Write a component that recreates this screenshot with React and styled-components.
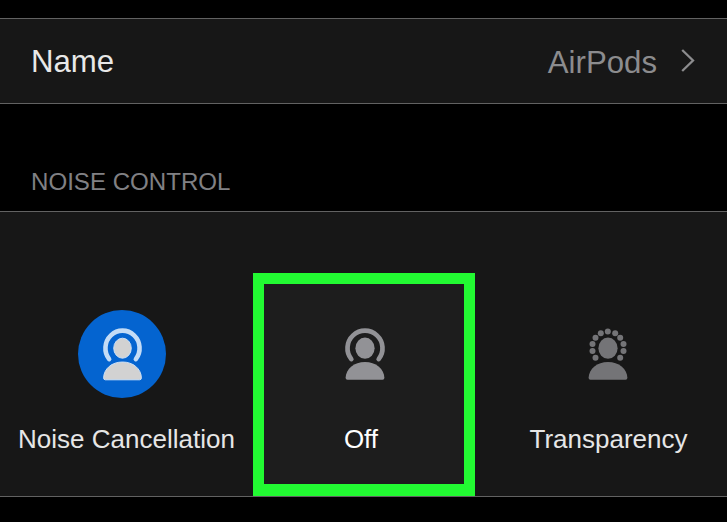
import React from "react";
import styled, { createGlobalStyle } from "styled-components";

const GlobalStyle = createGlobalStyle`
  * { box-sizing: border-box; }
  body {
    margin: 0;
    background: #000;
    font-family: "Liberation Sans", Arial, sans-serif;
    overflow: hidden;
  }
`;

const Screen = styled.main`
  width: 727px;
  height: 522px;
  padding-top: 18px;
  background: #000;
  display: flex;
  flex-direction: column;
`;

const NameRow = styled.div`
  height: 86px;
  padding: 0 32px 0 31px;
  display: flex;
  align-items: center;
  background: #171717;
  border-top: 1px solid #626262;
  border-bottom: 1px solid #626262;
  line-height: 36px;
`;

const RowLabel = styled.span`
  flex: 1;
  padding-top: 2px;
  font-size: 31.2px;
  color: #e8e8e8;
`;

const RowValue = styled.span`
  font-size: 31.2px;
  color: #8c8c8e;
  padding-top: 3px;
  margin-right: 24px;
`;

const Chevron = styled.svg`
  width: 14px;
  height: 24px;
  margin-top: -2px;
`;

const SectionTitle = styled.h2`
  height: 107px;
  margin: 0;
  padding: 64px 0 0 31px;
  font-size: 24.1px;
  line-height: 28px;
  font-weight: 400;
  color: #808084;
`;

const ModePanel = styled.section`
  height: 286px;
  display: grid;
  grid-template-columns: 253px 222px 252px;
  align-items: end;
  background: #171717;
  border-top: 1px solid #626262;
  border-bottom: 1px solid #626262;
`;

const Mode = styled.div`
  height: 223px;
  display: flex;
  flex-direction: column;
  align-items: center;
  padding-top: ${(p) => (p.$selected ? 26 : 37)}px;
  padding-left: ${(p) => p.$inset || 0}px;
  background: ${(p) => (p.$selected ? "#1d1d1d" : "transparent")};
  border: ${(p) => (p.$selected ? "11px solid #22fa32" : "0")};
  border-bottom-width: ${(p) => (p.$selected ? 12 : 0)}px;
`;

const Badge = styled.div`
  width: 88px;
  height: 88px;
  flex: none;
  border-radius: 50%;
  display: flex;
  justify-content: center;
  padding-top: 18px;
  margin-left: ${(p) => p.$shift}px;
  background: ${(p) => (p.$active ? "#0464d0" : "transparent")};
`;

const Person = styled.svg`
  width: ${(p) => p.$width || 40}px;
  height: 52px;
  overflow: visible;
`;

const ModeLabel = styled.span`
  margin-top: 26px;
  margin-left: ${(p) => p.$shift || 0}px;
  font-size: 26px;
  line-height: 30px;
  white-space: nowrap;
  color: ${(p) => (p.$bright ? "#fff" : "#e6e6e6")};
`;

const DOTS = [
  [19.8, 3.5], [12.8, 5.2], [27.2, 5.2], [7.5, 9.8], [32.2, 9.8],
  [4.5, 16.1], [35.5, 16.1], [4.5, 23.1], [35.5, 23.1], [7.5, 29.8], [32.2, 29.8],
];

function ListenerIcon({ fill, ring = fill, edge, dotted, width }) {
  return (
    <Person viewBox="0 0 40 52" preserveAspectRatio="none" $width={width} aria-hidden="true">
      {dotted ? (
        DOTS.map(([x, y]) => <circle key={`${x}-${y}`} cx={x} cy={y} r="3" fill={fill} />)
      ) : (
        <path
          d="M6.3 31.1A17.5 17.5 0 1 1 33.7 31.1"
          fill="none"
          stroke={ring}
          strokeWidth="4.7"
          strokeLinecap="round"
        />
      )}
      <g fill={fill} stroke={edge || "none"} strokeWidth="1">
        <ellipse cx="20" cy="20.2" rx={edge ? 9 : 9.6} ry={edge ? 10 : 10.6} />
        <path d="M0.6 49.8C1 40.6 9.2 34 20 34S39 40.6 39.4 49.8Q39.4 51.8 37.6 51.8H2.4Q0.6 51.8 0.6 49.8Z" />
      </g>
    </Person>
  );
}

export default function App() {
  return (
    <>
      <GlobalStyle />
      <Screen>
        <NameRow>
          <RowLabel>Name</RowLabel>
          <RowValue>AirPods</RowValue>
          <Chevron viewBox="0 0 14 24" aria-hidden="true">
            <path d="M1.2 2L12 12.5L1.2 23" fill="none" stroke="#8c8c8e" strokeWidth="2.3" />
          </Chevron>
        </NameRow>
        <SectionTitle>NOISE CONTROL</SectionTitle>
        <ModePanel>
          <Mode>
            <Badge $active $shift={-9}>
              <ListenerIcon fill="#d2d2d2" ring="#c4dcf6" edge="#cfe2f6" width={39} />
            </Badge>
            <ModeLabel>Noise Cancellation</ModeLabel>
          </Mode>
          <Mode $selected>
            <Badge $shift={1}>
              <ListenerIcon fill="#929296" />
            </Badge>
            <ModeLabel $bright $shift={-6}>Off</ModeLabel>
          </Mode>
          <Mode $inset={14}>
            <Badge $shift={-1}>
              <ListenerIcon fill="#747477" dotted />
            </Badge>
            <ModeLabel $shift={1}>Transparency</ModeLabel>
          </Mode>
        </ModePanel>
      </Screen>
    </>
  );
}
